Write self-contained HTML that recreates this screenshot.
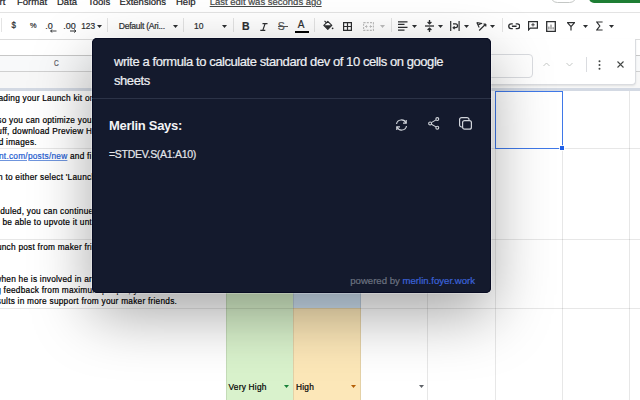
<!DOCTYPE html>
<html><head><meta charset="utf-8"><style>
html,body{margin:0;padding:0;}
body{width:640px;height:400px;position:relative;overflow:hidden;background:#fff;font-family:"Liberation Sans",sans-serif;}
.t{position:absolute;white-space:nowrap;-webkit-text-stroke:0.2px currentColor;}
.hl{position:absolute;left:0;width:640px;height:1px;}
</style></head><body>
<div class="t" style="left:-0.50px;top:-3.34px;font-size:9.5px;line-height:9.5px;color:#202124;font-weight:400;">rt</div>
<div class="t" style="left:17.00px;top:-3.34px;font-size:9.5px;line-height:9.5px;color:#202124;font-weight:400;">Format</div>
<div class="t" style="left:57.00px;top:-3.34px;font-size:9.5px;line-height:9.5px;color:#202124;font-weight:400;">Data</div>
<div class="t" style="left:88.00px;top:-3.34px;font-size:9.5px;line-height:9.5px;color:#202124;font-weight:400;">Tools</div>
<div class="t" style="left:119.60px;top:-3.34px;font-size:9.5px;line-height:9.5px;color:#202124;font-weight:400;">Extensions</div>
<div class="t" style="left:176.00px;top:-3.34px;font-size:9.5px;line-height:9.5px;color:#202124;font-weight:400;">Help</div>
<div class="t" style="left:209.70px;top:-3.34px;font-size:9.5px;line-height:9.5px;color:#444746;font-weight:400;text-decoration:underline;">Last edit was seconds ago</div>
<div style="position:absolute;left:550px;top:-12px;width:25px;height:12.8px;border:1px solid #c4c7c5;border-radius:8px;"></div>
<div style="position:absolute;left:589px;top:-12px;width:60px;height:14.5px;background:#1e7e34;border-radius:5px;"></div>
<div class="hl" style="top:12px;background:#e3e3e3;"></div>
<div style="position:absolute;left:1.2px;top:17.6px;width:1px;height:14.4px;background:#e4e4e4;"></div>
<div style="position:absolute;left:107.2px;top:17.6px;width:1px;height:14.4px;background:#e4e4e4;"></div>
<div style="position:absolute;left:183.1px;top:17.6px;width:1px;height:14.4px;background:#e4e4e4;"></div>
<div style="position:absolute;left:232.8px;top:17.6px;width:1px;height:14.4px;background:#e4e4e4;"></div>
<div style="position:absolute;left:314.0px;top:17.6px;width:1px;height:14.4px;background:#e4e4e4;"></div>
<div style="position:absolute;left:390.7px;top:17.6px;width:1px;height:14.4px;background:#e4e4e4;"></div>
<div style="position:absolute;left:501.5px;top:17.6px;width:1px;height:14.4px;background:#e4e4e4;"></div>
<div class="t" style="left:11.40px;top:22.43px;font-size:8px;line-height:8px;color:#2d2f31;font-weight:400;transform:scaleY(1.15);transform-origin:0 80%;">$</div>
<div class="t" style="left:30.00px;top:22.44px;font-size:7.4px;line-height:7.4px;color:#2d2f31;font-weight:400;">%</div>
<div class="t" style="left:45.20px;top:21.58px;font-size:9px;line-height:9px;color:#2d2f31;font-weight:400;">.0</div>
<div class="t" style="left:63.30px;top:21.58px;font-size:9px;line-height:9px;color:#2d2f31;font-weight:400;">.00</div>
<div class="t" style="left:81.20px;top:21.77px;font-size:8.3px;line-height:8.3px;color:#2d2f31;font-weight:400;">123</div>
<svg style="position:absolute;left:96.5px;top:24.9px" width="5" height="3" viewBox="0 0 5 3"><path d="M0 0h5L2.5 3z" fill="#2d2f31"/></svg>
<svg style="position:absolute;left:50px;top:29px" width="7" height="4" viewBox="0 0 7 4"><path d="M0.5 2h6M2.3 0.5L0.6 2l1.7 1.5" stroke="#2d2f31" stroke-width="0.9" fill="none"/></svg>
<svg style="position:absolute;left:69.5px;top:29px" width="7" height="4" viewBox="0 0 7 4"><path d="M0 2h6M4.2 0.5L5.9 2l-1.7 1.5" stroke="#2d2f31" stroke-width="1" fill="none"/></svg>
<div class="t" style="left:118.80px;top:21.92px;font-size:8.6px;line-height:8.6px;color:#2d2f31;font-weight:400;letter-spacing:-0.28px;">Default (Ari...</div>
<svg style="position:absolute;left:172.8px;top:24.9px" width="5" height="3" viewBox="0 0 5 3"><path d="M0 0h5L2.5 3z" fill="#2d2f31"/></svg>
<div class="t" style="left:194.00px;top:21.92px;font-size:8.6px;line-height:8.6px;color:#2d2f31;font-weight:400;">10</div>
<svg style="position:absolute;left:222.4px;top:24.9px" width="5" height="3" viewBox="0 0 5 3"><path d="M0 0h5L2.5 3z" fill="#2d2f31"/></svg>
<div class="t" style="left:242.00px;top:21.11px;font-size:10.5px;line-height:10.5px;color:#2d2f31;font-weight:700;">B</div>
<svg style="position:absolute;left:259.5px;top:22.5px" width="8" height="8" viewBox="0 0 8 8"><path d="M2.5 0.6h5M0.3 7.4h5M5.1 0.6L2.8 7.4" stroke="#2d2f31" stroke-width="1.2" fill="none"/></svg>
<div class="t" style="left:277.80px;top:21.11px;font-size:10.5px;line-height:10.5px;color:#555;font-weight:400;">S</div>
<div style="position:absolute;left:277.5px;top:26.2px;width:10px;height:1px;background:#555"></div>
<div class="t" style="left:297.80px;top:19.84px;font-size:10px;line-height:10px;color:#2d2f31;font-weight:400;">A</div>
<div style="position:absolute;left:295px;top:31px;width:14px;height:2.3px;background:#000"></div>
<svg style="position:absolute;left:322.5px;top:19.5px" width="11" height="10" viewBox="0 0 11 10"><path d="M1.5 0.8l2.2 2.2" stroke="#2d2f31" stroke-width="1.1"/><path d="M0.8 5.3L4.8 1.3l4 4-4 4z" stroke="#2d2f31" stroke-width="1.1" fill="none" stroke-linejoin="round"/><path d="M0.8 5.3h8l-4 4z" fill="#2d2f31"/><circle cx="9.6" cy="8.3" r="0.9" fill="#2d2f31"/></svg>
<svg style="position:absolute;left:343px;top:22px" width="9" height="9" viewBox="0 0 9 9"><path d="M0.6 0.6h7.8v7.8H0.6zM4.5 0.6v7.8M0.6 4.5h7.8" stroke="#2d2f31" stroke-width="1.2" fill="none"/></svg>
<svg style="position:absolute;left:362.5px;top:22px" width="11" height="9" viewBox="0 0 11 9"><path d="M0.6 0.6h9.8v7.8H0.6z" stroke="#bdbdbd" stroke-width="1.1" fill="none" stroke-dasharray="2 1.2"/><path d="M2 4.5h2.5M6.5 4.5h2.5M3.5 3.3v2.4M7.5 3.3v2.4" stroke="#bdbdbd" stroke-width="1"/></svg>
<svg style="position:absolute;left:380px;top:24.9px" width="5" height="3" viewBox="0 0 5 3"><path d="M0 0h5L2.5 3z" fill="#bdbdbd"/></svg>
<svg style="position:absolute;left:398px;top:21px" width="10" height="10" viewBox="0 0 10 10"><path d="M0 0.8h9.5M0 3.4h6.5M0 6.4h9.5M0 9.2h6.5" stroke="#2d2f31" stroke-width="1.3"/></svg>
<svg style="position:absolute;left:412.4px;top:24.9px" width="5" height="3" viewBox="0 0 5 3"><path d="M0 0h5L2.5 3z" fill="#2d2f31"/></svg>
<svg style="position:absolute;left:425px;top:19.5px" width="9" height="12" viewBox="0 0 9 12"><path d="M0 6h9" stroke="#2d2f31" stroke-width="1.3"/><path d="M4.5 0v3.6M2.6 2L4.5 3.9 6.4 2M4.5 12V8.4M2.6 10L4.5 8.1 6.4 10" stroke="#2d2f31" stroke-width="1.3" fill="none"/></svg>
<svg style="position:absolute;left:438.3px;top:24.9px" width="5" height="3" viewBox="0 0 5 3"><path d="M0 0h5L2.5 3z" fill="#2d2f31"/></svg>
<svg style="position:absolute;left:450px;top:21px" width="10" height="10" viewBox="0 0 10 10"><path d="M0.7 0v10M9.1 0v10M3 2.9h2.6a1.9 1.9 0 0 1 0 3.8H3.4M4.6 5.4L3.2 6.7l1.4 1.3" stroke="#2d2f31" stroke-width="1.2" fill="none"/></svg>
<svg style="position:absolute;left:464.2px;top:24.9px" width="5" height="3" viewBox="0 0 5 3"><path d="M0 0h5L2.5 3z" fill="#2d2f31"/></svg>
<svg style="position:absolute;left:476px;top:21px" width="11" height="10" viewBox="0 0 11 10"><path d="M0.8 1.5L6.2 2.6M0.8 1.5L3.2 6.5M2 4l2.6-1" stroke="#2d2f31" stroke-width="1.1" fill="none"/><path d="M3.2 9.5L9.8 3M9.8 3H7.4M9.8 3V5.4" stroke="#2d2f31" stroke-width="1.2" fill="none"/></svg>
<svg style="position:absolute;left:490.3px;top:24.9px" width="5" height="3" viewBox="0 0 5 3"><path d="M0 0h5L2.5 3z" fill="#2d2f31"/></svg>
<svg style="position:absolute;left:507.7px;top:23.3px" width="12.5" height="6.5" viewBox="0 0 12.5 6.5"><path d="M4.8 0.9H3.1a2.35 2.35 0 0 0 0 4.7H4.8M7.7 0.9h1.7a2.35 2.35 0 0 1 0 4.7H7.7M3.9 3.25h4.7" stroke="#2d2f31" stroke-width="1.4" fill="none"/></svg>
<svg style="position:absolute;left:527.6px;top:21px" width="11" height="10" viewBox="0 0 11 10"><path d="M0.6 0.6h8.8v6.6H2.3L0.6 8.9z" stroke="#2d2f31" stroke-width="1.2" fill="none"/><path d="M5 2.1v3.4M3.3 3.8h3.4" stroke="#2d2f31" stroke-width="0.9"/></svg>
<svg style="position:absolute;left:546px;top:21px" width="10" height="11" viewBox="0 0 10 11"><path d="M0.7 0.7h8.6v9.6H0.7z" stroke="#2d2f31" stroke-width="1.3" fill="none"/><path d="M2.9 8.4V5.6M5 8.4V3.6M7.1 8.4V6.2" stroke="#666" stroke-width="1"/></svg>
<svg style="position:absolute;left:566.5px;top:22px" width="8" height="9" viewBox="0 0 8 9"><path d="M0.4 0.6h7.2L4 4.6zM4 4.4V8.5" stroke="#2d2f31" stroke-width="1.2" fill="none" stroke-linejoin="round"/></svg>
<svg style="position:absolute;left:583px;top:24.9px" width="5" height="3" viewBox="0 0 5 3"><path d="M0 0h5L2.5 3z" fill="#2d2f31"/></svg>
<svg style="position:absolute;left:596px;top:21px" width="7" height="10" viewBox="0 0 7 10"><path d="M6.6 1H0.8l3 4-3 4h5.8" stroke="#2d2f31" stroke-width="1.2" fill="none"/></svg>
<svg style="position:absolute;left:609.3px;top:24.9px" width="5" height="3" viewBox="0 0 5 3"><path d="M0 0h5L2.5 3z" fill="#2d2f31"/></svg>
<div class="hl" style="top:38.9px;height:1px;background:#dcdcdc;"></div>
<div style="position:absolute;left:0;top:55px;width:640px;height:17px;background:#f8f9fa;border-top:1px solid #c7c7c7;border-bottom:1px solid #d0d0d0;box-sizing:border-box"></div>
<div class="t" style="left:53.60px;top:60.04px;font-size:7.4px;line-height:7.4px;color:#5f6368;font-weight:400;transform:scale(0.88,1.18);transform-origin:0 85%;">C</div>
<div style="position:absolute;left:0;top:72px;width:640px;height:16px;background:#f7f7f7;"></div>
<div style="position:absolute;left:0;top:88px;width:640px;height:2.5px;background:#d3d9e3;"></div>
<div style="position:absolute;left:226px;top:90.5px;width:67px;height:310px;background:#d9f2cc;"></div>
<div style="position:absolute;left:293px;top:239px;width:67.5px;height:69px;background:#cfe2f3;"></div>
<div style="position:absolute;left:293px;top:308px;width:67.5px;height:92px;background:#fce7b8;"></div>
<div class="hl" style="top:147.5px;background:rgba(0,0,0,.095)"></div>
<div class="hl" style="top:238.5px;background:rgba(0,0,0,.095)"></div>
<div class="hl" style="top:307.5px;background:rgba(0,0,0,.095)"></div>
<div style="position:absolute;left:225.5px;top:90.5px;width:1px;height:310px;background:rgba(0,0,0,.095)"></div>
<div style="position:absolute;left:292.5px;top:90.5px;width:1px;height:310px;background:rgba(0,0,0,.095)"></div>
<div style="position:absolute;left:360.0px;top:90.5px;width:1px;height:310px;background:rgba(0,0,0,.095)"></div>
<div style="position:absolute;left:427.0px;top:90.5px;width:1px;height:310px;background:rgba(0,0,0,.095)"></div>
<div style="position:absolute;left:494.5px;top:90.5px;width:1px;height:310px;background:rgba(0,0,0,.095)"></div>
<div style="position:absolute;left:561.5px;top:90.5px;width:1px;height:310px;background:rgba(0,0,0,.095)"></div>
<div style="position:absolute;left:628.5px;top:90.5px;width:1px;height:310px;background:rgba(0,0,0,.095)"></div>
<div class="t" style="left:-1.50px;top:93.97px;font-size:8.3px;line-height:8.3px;color:#000;font-weight:400;white-space:pre;letter-spacing:0.24px;">ading your Launch kit on</div>
<div class="t" style="left:-2.70px;top:115.97px;font-size:8.3px;line-height:8.3px;color:#000;font-weight:400;white-space:pre;letter-spacing:0.24px;">so you can optimize your</div>
<div class="t" style="left:-2.70px;top:126.97px;font-size:8.3px;line-height:8.3px;color:#000;font-weight:400;white-space:pre;letter-spacing:0.24px;">uff, download Preview Hunt</div>
<div class="t" style="left:-1.30px;top:137.97px;font-size:8.3px;line-height:8.3px;color:#000;font-weight:400;white-space:pre;letter-spacing:0.24px;">d images.</div>
<div class="t" style="left:-2.00px;top:173.47px;font-size:8.3px;line-height:8.3px;color:#000;font-weight:400;white-space:pre;letter-spacing:0.24px;">n to either select 'Launch</div>
<div class="t" style="left:0.20px;top:206.97px;font-size:8.3px;line-height:8.3px;color:#000;font-weight:400;white-space:pre;letter-spacing:0.24px;">duled, you can continue</div>
<div class="t" style="left:-2.70px;top:217.97px;font-size:8.3px;line-height:8.3px;color:#000;font-weight:400;white-space:pre;letter-spacing:0.24px;">  be able to upvote it until</div>
<div class="t" style="left:-3.10px;top:242.97px;font-size:8.3px;line-height:8.3px;color:#000;font-weight:400;white-space:pre;letter-spacing:0.24px;">unch post from maker friends</div>
<div class="t" style="left:-4.80px;top:275.07px;font-size:8.3px;line-height:8.3px;color:#000;font-weight:400;white-space:pre;letter-spacing:0.24px;">when he is involved in an</div>
<div class="t" style="left:-3.80px;top:285.87px;font-size:8.3px;line-height:8.3px;color:#000;font-weight:400;white-space:pre;letter-spacing:0.24px;">g feedback from maximum people, your</div>
<div class="t" style="left:-3.20px;top:297.47px;font-size:8.3px;line-height:8.3px;color:#000;font-weight:400;white-space:pre;letter-spacing:0.24px;">sults in more support from your maker friends.</div>
<div class="t" style="left:-1.00px;top:152.17px;font-size:8.3px;line-height:8.3px;color:#000;font-weight:400;letter-spacing:0.24px;"><span style="color:#1d5bd0;text-decoration:underline;text-decoration-color:#6f95dd">nt.com/posts/new</span> and fill</div>
<div class="t" style="left:228.50px;top:382.97px;font-size:8.3px;line-height:8.3px;color:#000;font-weight:400;letter-spacing:0.24px;">Very High</div>
<div class="t" style="left:296.00px;top:382.97px;font-size:8.3px;line-height:8.3px;color:#000;font-weight:400;letter-spacing:0.24px;">High</div>
<svg style="position:absolute;left:284px;top:384.5px" width="5" height="3" viewBox="0 0 5 3"><path d="M0 0h5L2.5 3z" fill="#188038"/></svg>
<svg style="position:absolute;left:351px;top:384.5px" width="5" height="3" viewBox="0 0 5 3"><path d="M0 0h5L2.5 3z" fill="#b45f06"/></svg>
<svg style="position:absolute;left:418.5px;top:384.5px" width="5" height="3" viewBox="0 0 5 3"><path d="M0 0h5L2.5 3z" fill="#5f6368"/></svg>
<div style="position:absolute;left:494.6px;top:90.6px;width:68.5px;height:58.15px;border:1.7px solid #3f78e8;box-sizing:border-box"></div>
<div style="position:absolute;left:559.8px;top:145.7px;width:4.4px;height:4.4px;background:#1f5fe6;box-shadow:0 0 0 0.8px #fff"></div>
<div style="position:absolute;left:300px;top:38.6px;width:336px;height:46.4px;background:#fff;border:1px solid #dadce0;border-top:0;box-sizing:border-box;border-radius:0 0 4px 4px;box-shadow:0 1px 2px rgba(60,64,67,.12)"></div>
<div style="position:absolute;left:400px;top:53.6px;width:132.6px;height:24px;border:1px solid #dadce0;border-radius:4px;box-sizing:border-box"></div>
<svg style="position:absolute;left:543px;top:62px" width="7" height="5" viewBox="0 0 7 5"><path d="M0.5 4L3.5 1l3 3" stroke="#c4c7c5" stroke-width="1" fill="none"/></svg>
<svg style="position:absolute;left:566px;top:62px" width="7" height="5" viewBox="0 0 7 5"><path d="M0.5 1L3.5 4l3-3" stroke="#c4c7c5" stroke-width="1" fill="none"/></svg>
<div style="position:absolute;left:586px;top:57px;width:1px;height:15px;background:#dadce0"></div>
<svg style="position:absolute;left:597.5px;top:59.5px" width="3" height="10" viewBox="0 0 3 10"><circle cx="1.5" cy="1.3" r="1" fill="#444746"/><circle cx="1.5" cy="5" r="1" fill="#444746"/><circle cx="1.5" cy="8.7" r="1" fill="#444746"/></svg>
<svg style="position:absolute;left:616.5px;top:61px" width="7" height="7" viewBox="0 0 7 7"><path d="M0.5 0.5l6 6M6.5 0.5l-6 6" stroke="#444746" stroke-width="1.1"/></svg>
<div id="pop" style="position:absolute;left:92px;top:38px;width:399px;height:254.5px;background:#141a2d;border-radius:5px;box-shadow:inset 0 0 0 1px #070b22,0 0 0 0.6px rgba(255,255,255,.5),0 22px 60px rgba(0,0,0,.35);overflow:hidden">
<div class="t" style="left:22.00px;top:16.60px;font-size:13px;line-height:13px;color:#eef0f3;font-weight:400;letter-spacing:-0.43px;">write a formula to calculate standard dev of 10 cells on google</div>
<div class="t" style="left:22.00px;top:35.80px;font-size:13px;line-height:13px;color:#eef0f3;font-weight:400;letter-spacing:-0.43px;">sheets</div>
<div style="position:absolute;left:0;top:60px;width:100%;height:1px;background:#2c3347"></div>
<div class="t" style="left:17.00px;top:81.00px;font-size:13px;line-height:13px;color:#f3f4f6;font-weight:700;letter-spacing:-0.3px;-webkit-text-stroke:0;">Merlin Says:</div>
<div class="t" style="left:17.00px;top:111.31px;font-size:10.5px;line-height:10.5px;color:#e5e7eb;font-weight:400;letter-spacing:-0.28px;">=STDEV.S(A1:A10)</div>
<svg style="position:absolute;left:302.7px;top:80.9px" width="13" height="12" viewBox="0 0 13 12"><path d="M1.5 5A5 5 0 0 1 11 4M11.5 7A5 5 0 0 1 2 8" stroke="#d1d5db" stroke-width="1.2" fill="none"/><path d="M11.2 1v3.2H8M1.8 11V7.8H5" stroke="#d1d5db" stroke-width="1.2" fill="none"/></svg>
<svg style="position:absolute;left:335.5px;top:78.8px" width="12" height="13" viewBox="0 0 12 13"><circle cx="9.3" cy="2.1" r="1.45" stroke="#d1d5db" stroke-width="1.1" fill="none"/><circle cx="2.1" cy="6.4" r="1.45" stroke="#d1d5db" stroke-width="1.1" fill="none"/><circle cx="9.3" cy="10.7" r="1.45" stroke="#d1d5db" stroke-width="1.1" fill="none"/><path d="M3.4 5.6L8 2.9M3.4 7.2L8 9.9" stroke="#d1d5db" stroke-width="1.1"/></svg>
<svg style="position:absolute;left:366.8px;top:78.8px" width="14" height="13" viewBox="0 0 14 13"><path d="M3 10H2.6A2 2 0 0 1 0.6 8V2.6A2 2 0 0 1 2.6 0.6H8A2 2 0 0 1 10 2.6V3" stroke="#d1d5db" stroke-width="1.2" fill="none"/><rect x="3.6" y="3.6" width="8.8" height="8.6" rx="2" stroke="#d1d5db" stroke-width="1.2" fill="none"/></svg>
<div class="t" style="right:16px;top:237.87px;font-size:9.6px;line-height:9.6px;color:#6b7280;">powered by <span style="color:#3b63d9">merlin.foyer.work</span></div>
</div>
</body></html>
